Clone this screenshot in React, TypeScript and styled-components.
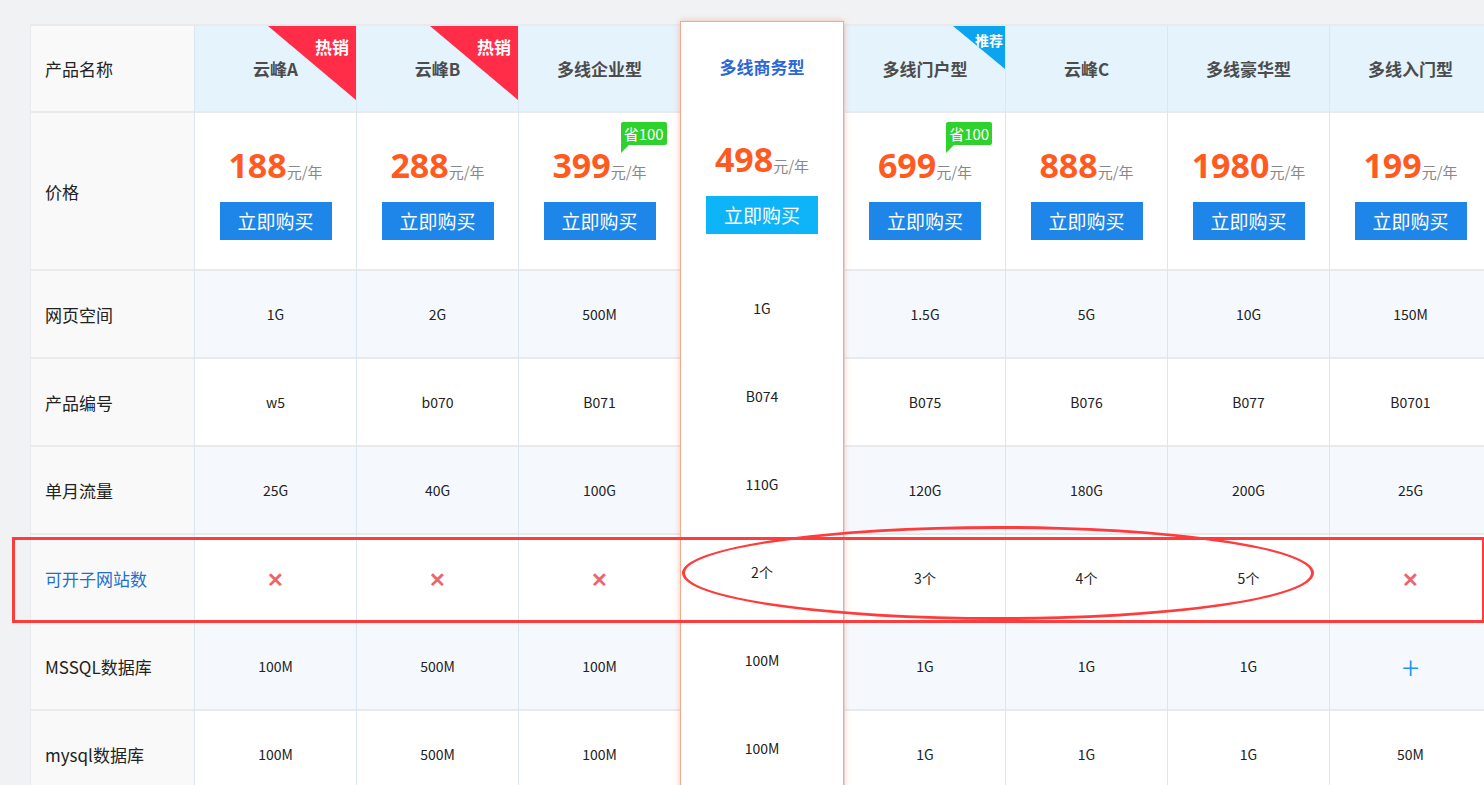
import React from "react";
import styled, { createGlobalStyle, css } from "styled-components";

const GlobalStyle = createGlobalStyle`
  html, body { margin: 0; padding: 0; background: #f1f2f4; overflow: hidden; }
  body { font-family: "Microsoft YaHei", "Noto Sans CJK SC", "Noto Sans", sans-serif; }
`;

type Cell = string | "x" | "+";
interface Product {
  name: string;
  price: string;
  badge?: "hot" | "rec";
  save?: boolean;
  featured?: boolean;
  cells: Cell[];
}

const rowLabels = ["网页空间", "产品编号", "单月流量", "可开子网站数", "MSSQL数据库", "mysql数据库"];

const products: Product[] = [
  { name: "云峰A", price: "188", badge: "hot", cells: ["1G", "w5", "25G", "x", "100M", "100M"] },
  { name: "云峰B", price: "288", badge: "hot", cells: ["2G", "b070", "40G", "x", "500M", "500M"] },
  { name: "多线企业型", price: "399", save: true, cells: ["500M", "B071", "100G", "x", "100M", "100M"] },
  { name: "多线商务型", price: "498", featured: true, cells: ["1G", "B074", "110G", "2个", "100M", "100M"] },
  { name: "多线门户型", price: "699", badge: "rec", save: true, cells: ["1.5G", "B075", "120G", "3个", "1G", "1G"] },
  { name: "云峰C", price: "888", cells: ["5G", "B076", "180G", "4个", "1G", "1G"] },
  { name: "多线豪华型", price: "1980", cells: ["10G", "B077", "200G", "5个", "1G", "1G"] },
  { name: "多线入门型", price: "199", cells: ["150M", "B0701", "25G", "x", "+", "50M"] },
];

export default function App() {
  return (
    <Page>
      <GlobalStyle />
      <Table>
        <Column $label>
          <HeadCell $label>产品名称</HeadCell>
          <PriceCell $label>价格</PriceCell>
          {rowLabels.map((l, i) => (
            <Row key={l} $label $alt={i % 2 === 0} $link={i === 3}>
              {l}
            </Row>
          ))}
        </Column>
        {products.map((p) => (
          <Column key={p.name} $featured={p.featured}>
            <HeadCell $featured={p.featured}>
              {p.name}
              {p.badge === "hot" && <HotBadge><span>热销</span></HotBadge>}
              {p.badge === "rec" && <RecBadge><span>推荐</span></RecBadge>}
            </HeadCell>
            <PriceCell $featured={p.featured}>
              <PriceLine>
                <Price>{p.price}</Price>
                <Unit>元/年</Unit>
                {p.save && <SaveTag>省100</SaveTag>}
              </PriceLine>
              <BuyButton $featured={p.featured}>立即购买</BuyButton>
            </PriceCell>
            {p.cells.map((c, i) => (
              <Row key={i} $alt={!p.featured && i % 2 === 0} $featured={p.featured}>
                {c === "x" ? <Cross>✕</Cross> : c === "+" ? <Plus>+</Plus> : c}
              </Row>
            ))}
          </Column>
        ))}
      </Table>
      <RedBox />
      <RedEllipse />
    </Page>
  );
}

const Page = styled.div`
  position: relative;
  width: 1484px;
  height: 785px;
  padding: 24px 0 0 30px;
  box-sizing: border-box;
  overflow: hidden;
`;
const Table = styled.div`
  display: grid;
  grid-template-columns: 164px 162px 162px 162px 164px 161px 162px 162px 162px;
  border-top: 2px solid #e8eaee;
`;
const Column = styled.div<{ $label?: boolean; $featured?: boolean }>`
  display: flex;
  flex-direction: column;
  border-left: 1px solid #dbe6f3;
  background: ${(p) => (p.$label ? "#f9f9f9" : "transparent")};
  ${(p) => p.$label && css`border-left: 1px solid #e8eaee;`}
  ${(p) =>
    p.$featured &&
    css`
      position: relative;
      z-index: 2;
      margin-top: -5px;
      background: #fff;
      border: 1px solid #f6a88a;
      box-shadow: 0 0 6px rgba(255, 120, 80, 0.45);
    `}
`;
const HeadCell = styled.div<{ $label?: boolean; $featured?: boolean }>`
  position: relative;
  overflow: hidden;
  height: 85px;
  display: flex;
  align-items: center;
  justify-content: ${(p) => (p.$label ? "flex-start" : "center")};
  padding-left: ${(p) => (p.$label ? "14px" : "0")};
  font-size: 17px;
  font-weight: ${(p) => (p.$label ? 400 : 700)};
  color: ${(p) => (p.$label ? "#222" : p.$featured ? "#2c67d6" : "#4c4c4c")};
  background: ${(p) => (p.$label ? "#f9f9f9" : p.$featured ? "#fff" : "#e5f3fd")};
  border-bottom: 2px solid ${(p) => (p.$featured ? "transparent" : "#e8eaee")};
  ${(p) => p.$featured && css`align-items: flex-start; padding-top: 32px; box-sizing: border-box;`}
`;
const HotBadge = styled.div`
  position: absolute;
  top: 0;
  right: 0;
  width: 88px;
  height: 74px;
  background: #ff2d48;
  clip-path: polygon(0 0, 100% 0, 100% 100%);
  span {
    position: absolute;
    top: 8px;
    right: 7px;
    color: #fff;
    font-size: 17px;
    font-weight: 700;
  }
`;
const RecBadge = styled(HotBadge)`
  width: 52px;
  height: 43px;
  background: #0aa5ee;
  span { top: 4px; right: 2px; font-size: 14px; }
`;
const PriceCell = styled.div<{ $label?: boolean; $featured?: boolean }>`
  height: 158px;
  display: flex;
  flex-direction: column;
  align-items: ${(p) => (p.$label ? "flex-start" : "center")};
  justify-content: center;
  padding-left: ${(p) => (p.$label ? "14px" : "0")};
  box-sizing: border-box;
  font-size: 17px;
  color: #222;
  background: ${(p) => (p.$label ? "#f9f9f9" : "#fff")};
  border-bottom: 2px solid ${(p) => (p.$featured ? "transparent" : "#e8eaee")};
`;
const PriceLine = styled.div`
  position: relative;
  display: flex;
  align-items: baseline;
  margin-bottom: 14px;
`;
const Price = styled.span`
  font-size: 34px;
  font-weight: 700;
  color: #ff5a1f;
  font-family: "Open Sans", "Noto Sans", sans-serif;
`;
const Unit = styled.span`
  font-size: 15px;
  color: #888;
`;
const SaveTag = styled.span`
  position: absolute;
  top: -20px;
  right: -20px;
  background: #2ed12e;
  color: #fff;
  font-size: 15px;
  padding: 1px 3px;
  border-radius: 2px;
  &::after {
    content: "";
    position: absolute;
    left: 0;
    bottom: -8px;
    border-right: 9px solid transparent;
    border-top: 9px solid #2ed12e;
  }
`;
const BuyButton = styled.div<{ $featured?: boolean }>`
  width: 112px;
  height: 38px;
  line-height: 38px;
  text-align: center;
  color: #fff;
  font-size: 19px;
  background: ${(p) => (p.$featured ? "#0db4f8" : "#1e86e8")};
`;
const Row = styled.div<{ $label?: boolean; $alt?: boolean; $link?: boolean; $featured?: boolean }>`
  height: 86px;
  flex-shrink: 0;
  display: flex;
  align-items: center;
  justify-content: ${(p) => (p.$label ? "flex-start" : "center")};
  padding-left: ${(p) => (p.$label ? "14px" : "0")};
  font-size: ${(p) => (p.$label ? "17px" : "14px")};
  color: ${(p) => (p.$link ? "#1e6fd0" : "#222")};
  background: ${(p) => (p.$label ? "#f9f9f9" : p.$alt ? "#f5f9fe" : "#fff")};
  border-bottom: 2px solid ${(p) => (p.$featured ? "transparent" : "#e8eaee")};
`;
const Cross = styled.span`
  color: #f0636a;
  font-size: 20px;
  font-weight: 700;
`;
const Plus = styled.span`
  color: #1e96f0;
  font-size: 32px;
  font-weight: 300;
  line-height: 1;
`;
const RedBox = styled.div`
  position: absolute;
  z-index: 3;
  left: 12px;
  top: 537px;
  width: 1467px;
  height: 80px;
  border: 3px solid #ff3b3b;
`;
const RedEllipse = styled.div`
  position: absolute;
  z-index: 3;
  left: 682px;
  top: 526px;
  width: 632px;
  height: 94px;
  border: 3px solid #ff3b3b;
  border-radius: 50%;
  box-sizing: border-box;
`;
